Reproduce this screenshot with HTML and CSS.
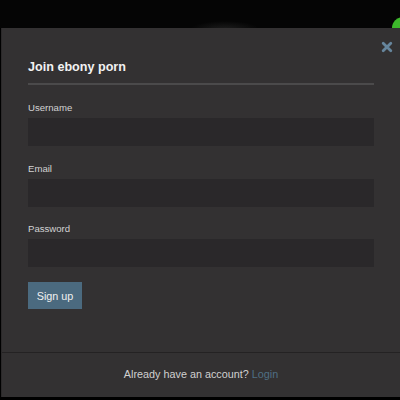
FILE: index.html
```html
<!DOCTYPE html>
<html>
<head>
<meta charset="utf-8">
<link rel="stylesheet" href="styles.css">
</head>
<body>
<div class="topbar"><span class="dot"></span></div>
<div class="modal">
  <a class="close" href="#" aria-label="Close">
    <svg width="12" height="12" viewBox="0 0 12 12"><path d="M2.2 2.2 L9.8 9.8 M9.8 2.2 L2.2 9.8" stroke="#66859c" stroke-width="2.8" stroke-linecap="round"/></svg>
  </a>
  <div class="body">
    <h2 class="title">Join ebony porn</h2>
    <form class="form">
      <label class="field"><span class="label">Username</span><input class="input" type="text"></label>
      <label class="field"><span class="label">Email</span><input class="input" type="email"></label>
      <label class="field"><span class="label">Password</span><input class="input" type="password"></label>
      <div><button class="btn" type="button">Sign up</button></div>
    </form>
  </div>
  <div class="footer">Already have an account? <a class="link" href="#">Login</a></div>
</div>
</body>
</html>
```
FILE: styles.css
```css
html, body { margin: 0; padding: 0; }
body {
  background: #000;
  font-family: "Liberation Sans", Arial, sans-serif;
  width: 400px;
  height: 400px;
  overflow: hidden;
}
.topbar {
  height: 28px;
  position: relative;
  background-color: #050505;
  background-image: radial-gradient(ellipse 34px 8px at 225px 29px, #1c1c1c, rgba(5,5,5,0) 100%);
}
.dot {
  position: absolute;
  left: 392px;
  top: 17px;
  width: 22px;
  height: 22px;
  border-radius: 50%;
  background: #3db82b;
}
.modal {
  position: relative;
  margin-left: 1px;
  height: 369px;
  background: #333132;
  display: flex;
  flex-direction: column;
  border-left: 1px solid #2b292a;
}
.close {
  position: absolute;
  left: 379px;
  top: 13px;
  width: 12px;
  height: 12px;
  display: block;
}
.close svg { display: block; }
.body {
  padding: 31px 26px 0 26px;
  height: 293px;
  border-bottom: 1px solid #242223;
}
.title {
  margin: 0;
  font-size: 12.6px;
  line-height: 16px;
  font-weight: bold;
  color: #f2f2f2;
  padding-bottom: 8px;
  border-bottom: 2px solid #4b4a4b;
}
.form {
  display: flex;
  flex-direction: column;
  gap: 16.5px;
  padding-top: 17px;
}
.field { display: flex; flex-direction: column; gap: 4px; }
.label {
  font-size: 9.6px;
  line-height: 12px;
  color: #d2d2d2;
}
.input {
  height: 28px;
  box-sizing: border-box;
  border: 0;
  margin: 0;
  background: #2a282a;
  width: 100%;
}
.btn {
  margin-top: -1.5px;
  height: 27px;
  width: 54px;
  padding: 0;
  border: 0;
  background: #4b6a7f;
  color: #f0f0f0;
  font-family: "Liberation Sans", Arial, sans-serif;
  font-size: 10.8px;
}
.footer {
  flex: 1;
  display: flex;
  align-items: center;
  justify-content: center;
  font-size: 10.8px;
  color: #d0d0d0;
  padding-bottom: 2px;
}
.link { color: #4f6f84; text-decoration: none; margin-left: 3px; }
```
